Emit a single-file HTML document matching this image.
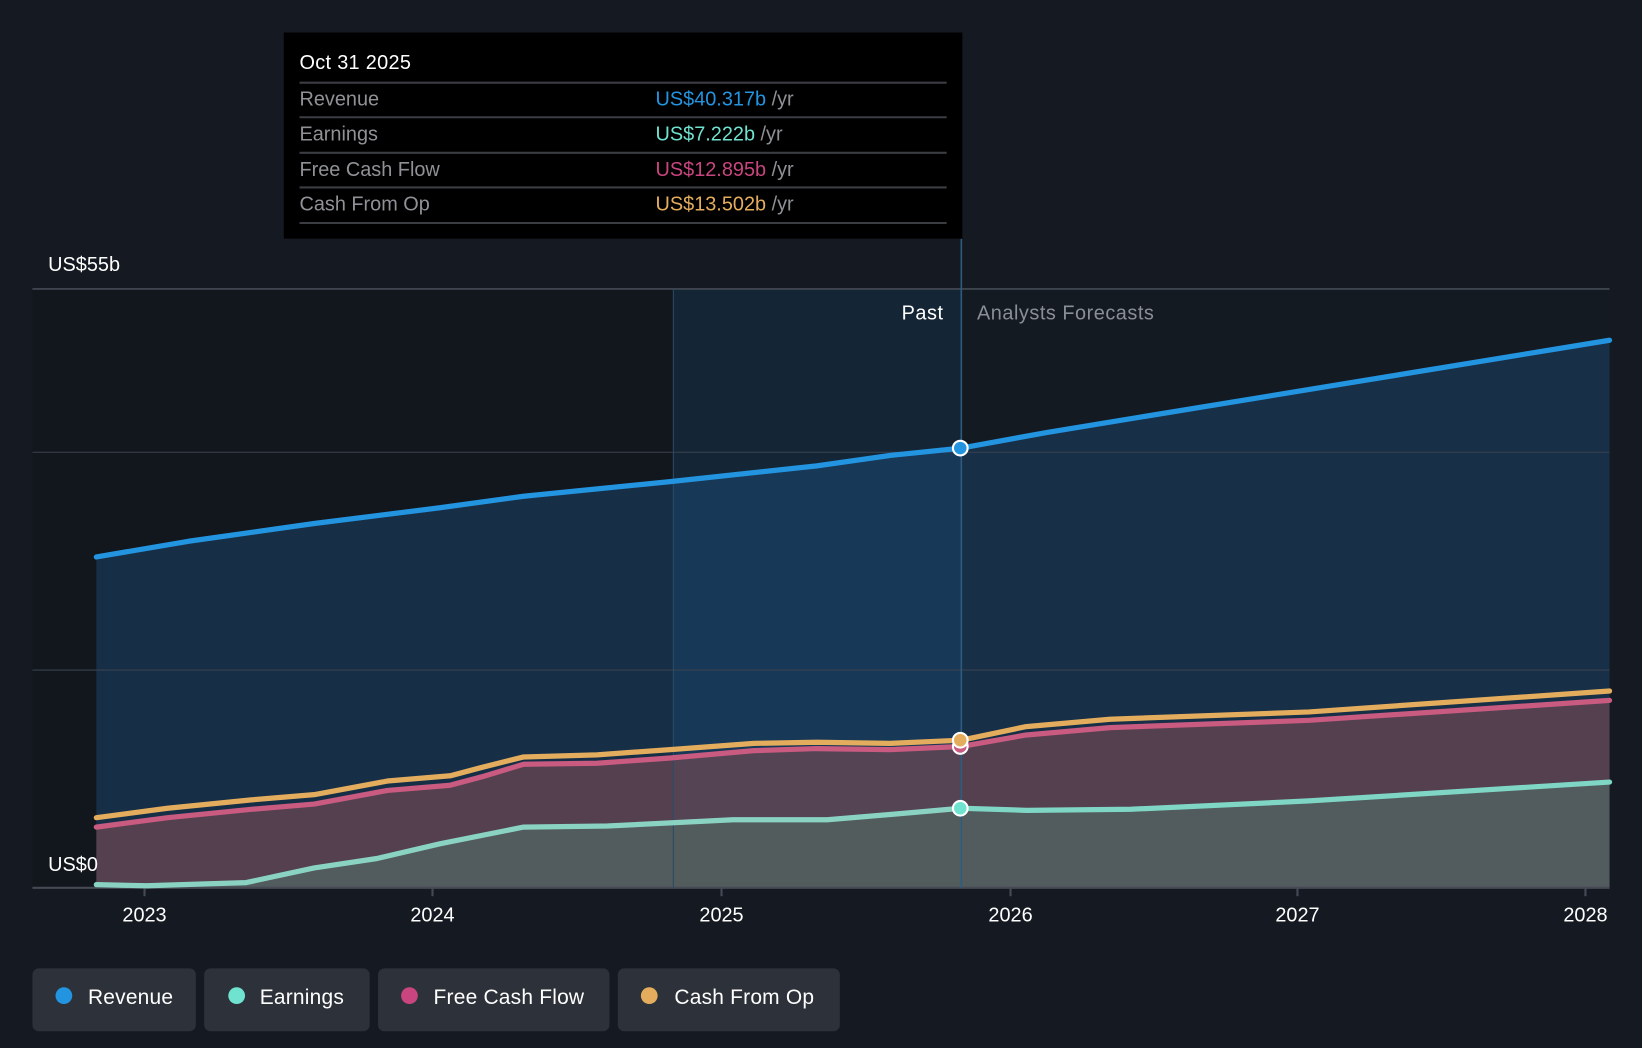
<!DOCTYPE html>
<html><head><meta charset="utf-8"><style>
html,body{margin:0;padding:0;background:#151a22;width:1642px;height:1048px;overflow:hidden}
svg{display:block}
text{font-family:"Liberation Sans",sans-serif}
</style></head><body>
<svg width="1642" height="1048" viewBox="0 0 1568 1001" preserveAspectRatio="none" xmlns="http://www.w3.org/2000/svg">
<rect width="1568" height="1001" fill="#151a22"/>
<rect x="31" y="276" width="887" height="572" fill="#12161d"/>
<rect x="918" y="276" width="619" height="572" fill="#141a22"/>
<path d="M92,532 L180,517 300,500 420,485 500,474 640,460 780,445 850,435 918,428 1000,413 1537,325 L1537,848 L92,848 Z" fill="#17304a" opacity="0.95"/>
<rect x="643" y="276" width="275" height="572" fill="#1c5a8c" opacity="0.22"/>
<path d="M92,790 L160,781 240,773 300,768 370,755 430,750 460,742 500,730 570,729 640,724 720,717 780,715 850,716 918,713 980,702 1060,695 1250,688 1537,669 L1537,848 L92,848 Z" fill="#7a4c54" opacity="0.62"/>
<path d="M92,845 L140,846 235,843 300,829 360,820 420,806 500,790 580,789 700,783 790,783 850,778 918,772 980,774 1080,773 1250,765 1537,747 L1537,848 L92,848 Z" fill="#52605f" opacity="0.85"/>
<line x1="31" y1="276" x2="1537" y2="276" stroke="#454a55" stroke-width="1.5"/>
<line x1="31" y1="432" x2="1537" y2="432" stroke="#3a4250" stroke-width="1"/>
<line x1="31" y1="640" x2="1537" y2="640" stroke="#3a4250" stroke-width="1"/>
<line x1="31" y1="848" x2="1537" y2="848" stroke="#454a55" stroke-width="2"/>
<line x1="643" y1="276" x2="643" y2="848" stroke="#2a4a66" stroke-width="1"/>
<line x1="918" y1="228" x2="918" y2="848" stroke="#2e5b80" stroke-width="1.5"/>
<g stroke="#454a55" stroke-width="2">
<line x1="138" y1="848" x2="138" y2="856"/><line x1="413" y1="848" x2="413" y2="856"/><line x1="689" y1="848" x2="689" y2="856"/><line x1="965" y1="848" x2="965" y2="856"/><line x1="1239" y1="848" x2="1239" y2="856"/><line x1="1514" y1="848" x2="1514" y2="856"/>
</g>
<g fill="none" stroke-width="5" stroke-linejoin="round" stroke-linecap="round">
<polyline stroke="#8ad3c3" points="92,845 140,846 235,843 300,829 360,820 420,806 500,790 580,789 700,783 790,783 850,778 918,772"/>
<polyline stroke="#7fd6c4" points="918,772 980,774 1080,773 1250,765 1537,747"/>
<polyline stroke="#c95a80" points="92,790 160,781 240,773 300,768 370,755 430,750 460,742 500,730 570,729 640,724 720,717 780,715 850,716 918,713 980,702 1060,695 1250,688 1537,669"/>
<polyline stroke="#e4ad5e" points="92,781 160,772 240,764 300,759 370,746 430,741 460,733 500,723 570,721 640,716 720,710 780,709 850,710 918,707 980,694 1060,687 1250,680 1537,660"/>
<polyline stroke="#2394e0" points="92,532 180,517 300,500 420,485 500,474 640,460 780,445 850,435 918,428 1000,413 1537,325"/>
</g>
<g stroke="#fff" stroke-width="2">
<circle cx="917" cy="428" r="7" fill="#2394e0"/>
<circle cx="917" cy="713" r="7" fill="#c95a80"/>
<circle cx="917" cy="707" r="7" fill="#e4ad5e"/>
<circle cx="917" cy="772" r="7" fill="#6fe3cf"/>
</g>
<text x="46" y="259" fill="#fff" font-size="19">US$55b</text>
<text x="46" y="832" fill="#fff" font-size="19">US$0</text>
<text x="901" y="305" fill="#fff" font-size="19" text-anchor="end" letter-spacing="0.5">Past</text>
<text x="933" y="305" fill="#8a8e96" font-size="19" letter-spacing="0.5">Analysts Forecasts</text>
<g fill="#fff" font-size="19" text-anchor="middle">
<text x="138" y="880">2023</text><text x="413" y="880">2024</text><text x="689" y="880">2025</text><text x="965" y="880">2026</text><text x="1239" y="880">2027</text><text x="1514" y="880">2028</text>
</g>
<rect x="271" y="31" width="648" height="197" fill="#000"/>
<text x="286" y="66" fill="#fff" font-size="19" letter-spacing="0.3">Oct 31 2025</text>
<g stroke="#3a3d42" stroke-width="2">
<line x1="286" y1="79" x2="904" y2="79"/><line x1="286" y1="112" x2="904" y2="112"/><line x1="286" y1="146" x2="904" y2="146"/><line x1="286" y1="179" x2="904" y2="179"/><line x1="286" y1="213" x2="904" y2="213"/>
</g>
<g font-size="19" fill="#8f9196">
<text x="286" y="101">Revenue</text><text x="286" y="134">Earnings</text><text x="286" y="168">Free Cash Flow</text><text x="286" y="201">Cash From Op</text>
</g>
<g font-size="19">
<text x="626" y="101"><tspan fill="#2394e0">US$40.317b</tspan><tspan fill="#8f9196"> /yr</tspan></text>
<text x="626" y="134"><tspan fill="#6fe3cf">US$7.222b</tspan><tspan fill="#8f9196"> /yr</tspan></text>
<text x="626" y="168"><tspan fill="#c9457f">US$12.895b</tspan><tspan fill="#8f9196"> /yr</tspan></text>
<text x="626" y="201"><tspan fill="#e4ad5e">US$13.502b</tspan><tspan fill="#8f9196"> /yr</tspan></text>
</g>
<g fill="#2d3139">
<rect x="31" y="925" width="156" height="60" rx="6"/>
<rect x="195" y="925" width="158" height="60" rx="6"/>
<rect x="361" y="925" width="221" height="60" rx="6"/>
<rect x="590" y="925" width="212" height="60" rx="6"/>
</g>
<circle cx="61" cy="951" r="8" fill="#2394e0"/>
<circle cx="226" cy="951" r="8" fill="#6fe3cf"/>
<circle cx="391" cy="951" r="8" fill="#c9457f"/>
<circle cx="620" cy="951" r="8" fill="#e4ad5e"/>
<g fill="#fff" font-size="20" letter-spacing="0.2">
<text x="84" y="959">Revenue</text><text x="248" y="959">Earnings</text><text x="414" y="959">Free Cash Flow</text><text x="644" y="959">Cash From Op</text>
</g>
</svg>
</body></html>
